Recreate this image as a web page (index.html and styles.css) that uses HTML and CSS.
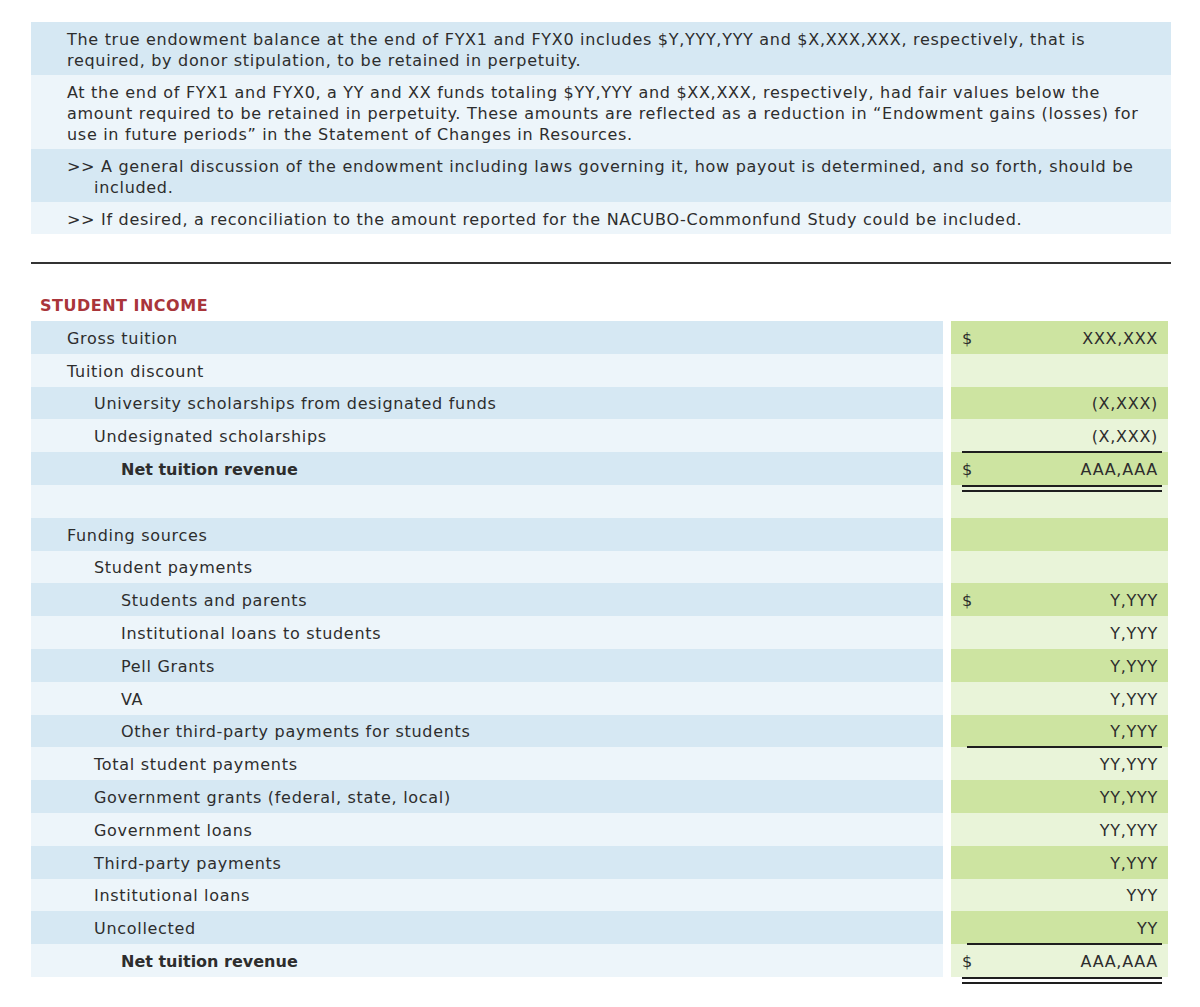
FILE: index.html
```html
<!DOCTYPE html>
<html>
<head>
<meta charset="utf-8">
<link rel="stylesheet" href="styles.css">
</head>
<body>
<div class="page">
  <section class="notes">
    <p class="note">The true endowment balance at the end of FYX1 and FYX0 includes $Y,YYY,YYY and $X,XXX,XXX, respectively, that is required, by donor stipulation, to be retained in perpetuity.</p>
    <p class="note">At the end of FYX1 and FYX0, a YY and XX funds totaling $YY,YYY and $XX,XXX, respectively, had fair values below the amount required to be retained in perpetuity. These amounts are reflected as a reduction in “Endowment gains (losses) for use in future periods” in the Statement of Changes in Resources.</p>
    <p class="note hang">&gt;&gt; A general discussion of the endowment including laws governing it, how payout is determined, and so forth, should be included.</p>
    <p class="note hang">&gt;&gt; If desired, a reconciliation to the amount reported for the NACUBO-Commonfund Study could be included.</p>
  </section>

  <hr class="divider">

  <h2 class="heading">STUDENT INCOME</h2>

  <div class="table">
    <div class="row"><div class="label l1">Gross tuition</div><div class="val"><span class="cur">$</span><span class="amt">XXX,XXX</span></div></div>
    <div class="row"><div class="label l1">Tuition discount</div><div class="val"><span class="amt"></span></div></div>
    <div class="row"><div class="label l2">University scholarships from designated funds</div><div class="val"><span class="amt">(X,XXX)</span></div></div>
    <div class="row"><div class="label l2">Undesignated scholarships</div><div class="val"><span class="amt">(X,XXX)</span></div></div>
    <div class="row total"><div class="label l3 bold">Net tuition revenue</div><div class="val rule-top rule-double"><span class="cur">$</span><span class="amt">AAA,AAA</span></div></div>
    <div class="row"><div class="label"></div><div class="val"><span class="amt"></span></div></div>
    <div class="row"><div class="label l1">Funding sources</div><div class="val"><span class="amt"></span></div></div>
    <div class="row"><div class="label l2">Student payments</div><div class="val"><span class="amt"></span></div></div>
    <div class="row"><div class="label l3">Students and parents</div><div class="val"><span class="cur">$</span><span class="amt">Y,YYY</span></div></div>
    <div class="row"><div class="label l3">Institutional loans to students</div><div class="val"><span class="amt">Y,YYY</span></div></div>
    <div class="row"><div class="label l3">Pell Grants</div><div class="val"><span class="amt">Y,YYY</span></div></div>
    <div class="row"><div class="label l3">VA</div><div class="val"><span class="amt">Y,YYY</span></div></div>
    <div class="row"><div class="label l3">Other third-party payments for students</div><div class="val"><span class="amt">Y,YYY</span></div></div>
    <div class="row"><div class="label l2">Total student payments</div><div class="val rule-top narrow"><span class="amt">YY,YYY</span></div></div>
    <div class="row"><div class="label l2">Government grants (federal, state, local)</div><div class="val"><span class="amt">YY,YYY</span></div></div>
    <div class="row"><div class="label l2">Government loans</div><div class="val"><span class="amt">YY,YYY</span></div></div>
    <div class="row"><div class="label l2">Third-party payments</div><div class="val"><span class="amt">Y,YYY</span></div></div>
    <div class="row"><div class="label l2">Institutional loans</div><div class="val"><span class="amt">YYY</span></div></div>
    <div class="row"><div class="label l2">Uncollected</div><div class="val"><span class="amt">YY</span></div></div>
    <div class="row total"><div class="label l3 bold">Net tuition revenue</div><div class="val rule-top narrow rule-double"><span class="cur">$</span><span class="amt">AAA,AAA</span></div></div>
  </div>
</div>
</body>
</html>
```

FILE: styles.css
```css
html, body {
  margin: 0;
  padding: 0;
  background: #ffffff;
}

body {
  font-family: "DejaVu Sans", "Open Sans", sans-serif;
  color: #2d2d2d;
  letter-spacing: 0.7px;
}

.page {
  padding: 22px 29px 30px 31px;
}

.notes {
  width: 1140px;
}

.note {
  margin: 0;
  padding: 7px 24px 4px 36px;
  font-size: 16px;
  line-height: 21px;
}

.note:nth-child(odd) {
  background: #d6e8f3;
}

.note:nth-child(even) {
  background: #edf5fa;
}

.note.hang {
  padding-left: 63px;
  text-indent: -27px;
}

.divider {
  width: 1140px;
  margin: 28px 0 0 0;
  border: 0;
  height: 2px;
  background: #333333;
}

.heading {
  margin: 32px 0 5px 9px;
  font-size: 16px;
  line-height: 20px;
  font-weight: 700;
  letter-spacing: 0.5px;
  color: #a9353a;
}

.table {
  display: flex;
  flex-direction: column;
  width: 1137px;
}

.row {
  display: flex;
  gap: 8px;
  height: 32.8px;
}

.label {
  width: 912px;
  display: flex;
  align-items: center;
  padding-top: 2px;
  font-size: 16px;
  box-sizing: border-box;
}

.l1 { padding-left: 36px; }
.l2 { padding-left: 63px; }
.l3 { padding-left: 90px; }
.bold { font-weight: 700; letter-spacing: 0; }

.row:nth-child(odd) .label { background: #d6e8f3; }
.row:nth-child(even) .label { background: #edf5fa; }
.row:nth-child(odd) .val { background: #cde4a1; }
.row:nth-child(even) .val { background: #e9f4d9; }

.val {
  width: 217px;
  position: relative;
  display: flex;
  align-items: center;
  padding: 2px 10px 0 11px;
  box-sizing: border-box;
  font-size: 16px;
}

.cur {
  flex: none;
}

.amt {
  flex: 1;
  text-align: right;
}

.rule-top::before {
  content: "";
  position: absolute;
  left: 11px;
  right: 6px;
  top: -1px;
  height: 2px;
  background: #1e1e1e;
}

.rule-top.narrow::before {
  left: 16px;
}

.rule-double::after {
  content: "";
  position: absolute;
  left: 11px;
  right: 6px;
  bottom: -7px;
  height: 3px;
  border-top: 2px solid #1e1e1e;
  border-bottom: 2px solid #1e1e1e;
  z-index: 1;
}
```
